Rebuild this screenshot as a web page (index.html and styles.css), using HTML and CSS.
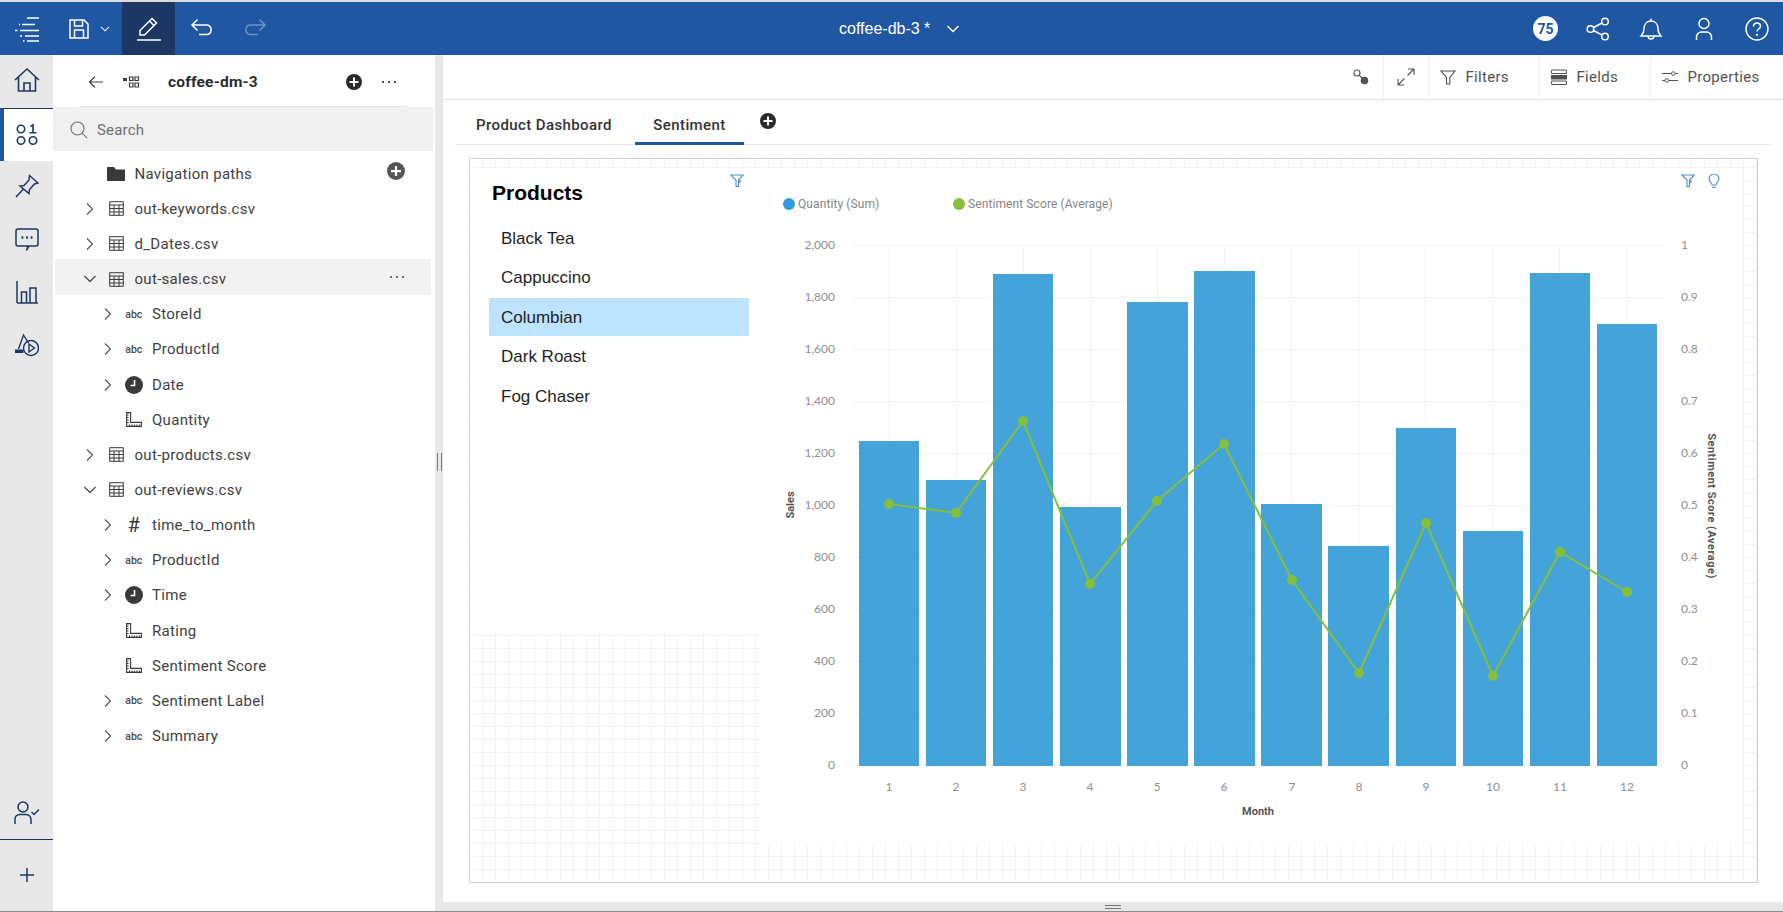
FILE: index.html
```html
<!DOCTYPE html>
<html lang="en">
<head>
<meta charset="utf-8">
<title>coffee-db-3</title>
<link rel="stylesheet" href="styles.css">
</head>
<body>
<svg class="sprite" xmlns="http://www.w3.org/2000/svg">
  <symbol id="i-menu" viewBox="0 0 26 26"><path d="M13 2h12M8 8.500h13M6 14.500h19M11 20h14M13 25h12" fill="none" stroke="currentColor" stroke-width="1.700"/><path d="M5 8.500h1M1 14.500h2.500M6 20h2M9 25h1.500" fill="none" stroke="currentColor" stroke-width="1.700"/></symbol>
  <symbol id="i-save" viewBox="0 0 24 24"><path d="M3 3h14l4 4v14H3zM7.500 3v6h8V3M7.500 21v-8h9v8" fill="none" stroke="currentColor" stroke-width="1.500"/></symbol>
  <symbol id="i-down" viewBox="0 0 16 16"><path d="M2.500 5 8 10.500 13.500 5" fill="none" stroke="currentColor" stroke-width="1.400"/></symbol>
  <symbol id="i-right" viewBox="0 0 16 16"><path d="M5 2.500 10.500 8 5 13.500" fill="none" stroke="currentColor" stroke-width="1.100"/></symbol>
  <symbol id="i-pencil" viewBox="0 0 26 26"><path d="M4 19v-4.500L16 2.500 20.500 7 8.500 19zM13.500 5l4.500 4.500" fill="none" stroke="currentColor" stroke-width="1.500"/><path d="M1 24h24" stroke="currentColor" stroke-width="1.500"/></symbol>
  <symbol id="i-undo" viewBox="0 0 24 24"><path d="M2 8h15a4.800 4.800 0 0 1 0 9.500H9M7.500 2.500 2 8l5.500 5.500" fill="none" stroke="currentColor" stroke-width="1.500"/></symbol>
  <symbol id="i-redo" viewBox="0 0 24 24"><path d="M22 8H7a4.800 4.800 0 0 0 0 9.500h8M16.500 2.500 22 8l-5.500 5.500" fill="none" stroke="currentColor" stroke-width="1.500"/></symbol>
  <symbol id="i-share" viewBox="0 0 24 24"><g fill="none" stroke="currentColor" stroke-width="1.500"><circle cx="4.500" cy="12" r="3.300"/><circle cx="19" cy="4.500" r="3.300"/><circle cx="19" cy="19.500" r="3.300"/><path d="M7.500 10.500 16 6M7.500 13.500 16 18"/></g></symbol>
  <symbol id="i-bell" viewBox="0 0 24 24"><path d="M2 19c2-2 3-3 3-7 0-5 3-8 7-8s7 3 7 8c0 4 1 5 3 7zM12 4V1.500M9 19a3 3 0 0 0 6 0" fill="none" stroke="currentColor" stroke-width="1.400"/></symbol>
  <symbol id="i-user" viewBox="0 0 24 24"><circle cx="12" cy="6.500" r="5" fill="none" stroke="currentColor" stroke-width="1.500"/><path d="M4.500 23v-3a5 5 0 0 1 5-5h5a5 5 0 0 1 5 5v3" fill="none" stroke="currentColor" stroke-width="1.500"/></symbol>
  <symbol id="i-help" viewBox="0 0 24 24"><circle cx="12" cy="12" r="11" fill="none" stroke="currentColor" stroke-width="1.400"/><path d="M8.500 9.500C8.500 7 10 6 12 6s3.500 1.300 3.500 3.300c0 2.700-3.500 2.700-3.500 5.200" fill="none" stroke="currentColor" stroke-width="1.500"/><circle cx="12" cy="17.800" r="1.100" fill="currentColor"/></symbol>
  <symbol id="i-home" viewBox="0 0 26 26"><path d="M1 13 13 2l12 11M4.500 10v14h17V10M10 24v-8h6v8" fill="none" stroke="currentColor" stroke-width="1.600"/></symbol>
  <symbol id="i-data" viewBox="0 0 24 24"><g fill="none" stroke="currentColor" stroke-width="1.600"><circle cx="6" cy="6" r="3.700"/><circle cx="6" cy="17.500" r="3.700"/><circle cx="18" cy="17.500" r="3.700"/><path d="M15.500 3.500 18 2v7.500M14.500 9.800h7"/></g></symbol>
  <symbol id="i-pin" viewBox="0 0 24 24"><path d="M14.500 1.500 23 9l-3.500 1-5 5.500-.5 4L5 12l4-.5 5-5.500zM1 23l7-7.500" fill="none" stroke="currentColor" stroke-width="1.500"/></symbol>
  <symbol id="i-comment" viewBox="0 0 24 24"><path d="M3 2h18a2 2 0 0 1 2 2v13a2 2 0 0 1-2 2h-7l-2.500 4.500L13 19H3a2 2 0 0 1-2-2V4a2 2 0 0 1 2-2z" fill="none" stroke="currentColor" stroke-width="1.500"/><path d="M6.500 10.500h1.800M11.100 10.500h1.800M15.700 10.500h1.800" stroke="currentColor" stroke-width="2.400"/></symbol>
  <symbol id="i-chart" viewBox="0 0 24 24"><path d="M2 1v22M2 23h21M6.500 23v-11h5v11M15 23V8h6v15" fill="none" stroke="currentColor" stroke-width="1.500"/></symbol>
  <symbol id="i-shapes" viewBox="0 0 24 24"><g fill="none" stroke="currentColor" stroke-width="1.400"><path d="M3.500 16 8.500 2l5 8"/><circle cx="16" cy="15" r="7.500"/><path d="m14 11 5.500 4-5.500 4z"/></g><path d="M0 16.500h8.500V20H0z" fill="currentColor"/></symbol>
  <symbol id="i-usercheck" viewBox="0 0 26 24"><circle cx="9" cy="6" r="5" fill="none" stroke="currentColor" stroke-width="1.500"/><path d="M1 23v-5a4.500 4.500 0 0 1 4.500-4.500h6A5 5 0 0 1 17 18.500V23M17.500 11l2.500 2.500 5-5" fill="none" stroke="currentColor" stroke-width="1.500"/></symbol>
  <symbol id="i-plus" viewBox="0 0 16 16"><path d="M8 1v14M1 8h14" stroke="currentColor" stroke-width="1.500"/></symbol>
  <symbol id="i-back" viewBox="0 0 16 16"><path d="M15 8H1.500M7 2.500 1.500 8 7 13.500" fill="none" stroke="currentColor" stroke-width="1.100"/></symbol>
  <symbol id="i-model" viewBox="0 0 17 12"><path d="M0 2h4v3H0z" fill="currentColor"/><path d="M6.500 1h3.500v3.500H6.500zM12 1h3.500v3.500H12zM6.500 7H10v4H6.500zM12 7h3.500v4H12z" fill="none" stroke="currentColor" stroke-width="1.200"/></symbol>
  <symbol id="i-addc" viewBox="0 0 16 16"><circle cx="8" cy="8" r="8" fill="currentColor"/><path d="M8 3.500v9M3.500 8h9" stroke="#fff" stroke-width="2"/></symbol>
  <symbol id="i-dots" viewBox="0 0 16 4"><circle cx="2" cy="2" r="1.100" fill="currentColor"/><circle cx="8" cy="2" r="1.100" fill="currentColor"/><circle cx="14" cy="2" r="1.100" fill="currentColor"/></symbol>
  <symbol id="i-search" viewBox="0 0 18 18"><circle cx="7.500" cy="7.500" r="6.500" fill="none" stroke="currentColor" stroke-width="1.100"/><path d="m12.200 12.200 5 5" stroke="currentColor" stroke-width="1.100"/></symbol>
  <symbol id="i-folder" viewBox="0 0 18 14"><path d="M0 0h7l2 2.500h9V14H0z" fill="currentColor"/></symbol>
  <symbol id="i-table" viewBox="0 0 15 15"><path d="M.700.700h13.600v13.600H.700zM.700 4h13.600M.700 7.500h13.600M.700 11h13.600M5 4v10.300M10 4v10.300" fill="none" stroke="currentColor" stroke-width="1"/></symbol>
  <symbol id="i-clock" viewBox="0 0 18 18"><circle cx="9" cy="9" r="9" fill="currentColor"/><path d="M9.500 4v5.500H5.500" fill="none" stroke="#fff" stroke-width="1.600"/></symbol>
  <symbol id="i-ruler" viewBox="0 0 16 15"><path d="M.600.600h4v9.800h10.800v4H.600zM.600 3h2M.600 5.500h2M.600 8h2M.600 10.500h2M3.500 14.400v-2M6 14.400v-2M8.500 14.400v-2M11 14.400v-2M13.500 14.400v-2" fill="none" stroke="currentColor" stroke-width="1.100"/></symbol>
  <symbol id="i-key" viewBox="0 0 16 16"><circle cx="4" cy="4" r="3" fill="none" stroke="currentColor" stroke-width="1.100"/><path d="m6 6 4 4" stroke="currentColor" stroke-width="1.100"/><circle cx="11.500" cy="11.500" r="3.800" fill="currentColor"/></symbol>
  <symbol id="i-expand" viewBox="0 0 18 18"><path d="M10.500 7.500 17 1M11 1h6v6M7.500 10.500 1 17M1 11v6h6" fill="none" stroke="currentColor" stroke-width="1.100"/></symbol>
  <symbol id="i-filter" viewBox="0 0 16 16"><path d="M1 2h14L9.800 8.500V15H6.500V8.500z" fill="none" stroke="currentColor" stroke-width="1.100"/></symbol>
  <symbol id="i-fields" viewBox="0 0 16 16"><path d="M.600 1h14.800v3.500H.600zM.600 12h14.800v3.500H.600z" fill="none" stroke="currentColor" stroke-width="1"/><path d="M0 6h16v4.500H0z" fill="currentColor"/></symbol>
  <symbol id="i-props" viewBox="0 0 16 16"><g fill="none" stroke="currentColor" stroke-width="1"><path d="M0 4.500h9.500M13 4.500h3M0 11.500h3M6.500 11.500H16"/><circle cx="11.300" cy="4.500" r="1.800"/><circle cx="4.700" cy="11.500" r="1.800"/></g></symbol>
  <symbol id="i-wfilter" viewBox="0 0 14 14"><path d="M.700 1h12.600L8.500 6v6.500H6V6z" fill="none" stroke="currentColor" stroke-width="1.100"/><circle cx="9.500" cy="7.500" r="1.300" fill="currentColor"/></symbol>
  <symbol id="i-bulb" viewBox="0 0 12 15"><path d="M4 11C4 8.500 1 7.500 1 5a5 5 0 0 1 10 0c0 2.500-3 3.500-3 6zM4 13.200h4" fill="none" stroke="currentColor" stroke-width="1.100"/></symbol>
</svg>

<div class="app">
  <header class="topbar">
    <div class="topbar-left">
      <button class="tb-btn"><svg class="ic-26"><use href="#i-menu"/></svg></button>
      <button class="tb-btn save"><svg class="ic-24"><use href="#i-save"/></svg><svg class="ic-12 caret"><use href="#i-down"/></svg></button>
      <button class="tb-btn active"><svg class="ic-26"><use href="#i-pencil"/></svg></button>
      <button class="tb-btn"><svg class="ic-24"><use href="#i-undo"/></svg></button>
      <button class="tb-btn faded"><svg class="ic-24"><use href="#i-redo"/></svg></button>
    </div>
    <div class="doc-title"><span>coffee-db-3 *</span><svg class="ic-16"><use href="#i-down"/></svg></div>
    <div class="topbar-right">
      <span class="badge">75</span>
      <button class="tb-btn"><svg class="ic-24"><use href="#i-share"/></svg></button>
      <button class="tb-btn"><svg class="ic-24"><use href="#i-bell"/></svg></button>
      <button class="tb-btn"><svg class="ic-24"><use href="#i-user"/></svg></button>
      <button class="tb-btn"><svg class="ic-24"><use href="#i-help"/></svg></button>
    </div>
  </header>

  <div class="workspace">
    <nav class="rail">
      <a class="rail-item up"><svg class="ic-26"><use href="#i-home"/></svg></a>
      <a class="rail-item current"><svg class="ic-24"><use href="#i-data"/></svg></a>
      <a class="rail-item up"><svg class="ic-24"><use href="#i-pin"/></svg></a>
      <a class="rail-item up"><svg class="ic-24"><use href="#i-comment"/></svg></a>
      <a class="rail-item up"><svg class="ic-24"><use href="#i-chart"/></svg></a>
      <a class="rail-item up"><svg class="ic-24"><use href="#i-shapes"/></svg></a>
      <a class="rail-item rail-user"><svg class="ic-26"><use href="#i-usercheck"/></svg></a>
      <a class="rail-item rail-add"><svg class="ic-16"><use href="#i-plus"/></svg></a>
    </nav>

    <aside class="panel">
      <div class="panel-head">
        <svg class="ic-16"><use href="#i-back"/></svg>
        <svg class="ic-model"><use href="#i-model"/></svg>
        <strong class="panel-title">coffee-dm-3</strong>
        <svg class="ic-16 head-add"><use href="#i-addc"/></svg>
        <svg class="ic-dots"><use href="#i-dots"/></svg>
      </div>
      <div class="search"><svg class="ic-18"><use href="#i-search"/></svg><span>Search</span></div>
      <ul class="tree">
        <li class="row l1"><span class="chev"></span><span class="ico"><svg class="ic-folder"><use href="#i-folder"/></svg></span><span>Navigation paths</span><svg class="act ic-18 muted"><use href="#i-addc"/></svg></li>
        <li class="row l1"><svg class="chev"><use href="#i-right"/></svg><span class="ico"><svg class="ic-15"><use href="#i-table"/></svg></span><span>out-keywords.csv</span></li>
        <li class="row l1"><svg class="chev"><use href="#i-right"/></svg><span class="ico"><svg class="ic-15"><use href="#i-table"/></svg></span><span>d_Dates.csv</span></li>
        <li class="row l1 hover"><svg class="chev"><use href="#i-down"/></svg><span class="ico"><svg class="ic-15"><use href="#i-table"/></svg></span><span>out-sales.csv</span><svg class="act ic-dots"><use href="#i-dots"/></svg></li>
        <li class="row l2"><svg class="chev"><use href="#i-right"/></svg><span class="ico abc">abc</span><span>StoreId</span></li>
        <li class="row l2"><svg class="chev"><use href="#i-right"/></svg><span class="ico abc">abc</span><span>ProductId</span></li>
        <li class="row l2"><svg class="chev"><use href="#i-right"/></svg><span class="ico"><svg class="ic-18"><use href="#i-clock"/></svg></span><span>Date</span></li>
        <li class="row l2"><span class="chev"></span><span class="ico"><svg class="ic-ruler"><use href="#i-ruler"/></svg></span><span>Quantity</span></li>
        <li class="row l1"><svg class="chev"><use href="#i-right"/></svg><span class="ico"><svg class="ic-15"><use href="#i-table"/></svg></span><span>out-products.csv</span></li>
        <li class="row l1"><svg class="chev"><use href="#i-down"/></svg><span class="ico"><svg class="ic-15"><use href="#i-table"/></svg></span><span>out-reviews.csv</span></li>
        <li class="row l2"><svg class="chev"><use href="#i-right"/></svg><span class="ico hash">#</span><span>time_to_month</span></li>
        <li class="row l2"><svg class="chev"><use href="#i-right"/></svg><span class="ico abc">abc</span><span>ProductId</span></li>
        <li class="row l2"><svg class="chev"><use href="#i-right"/></svg><span class="ico"><svg class="ic-18"><use href="#i-clock"/></svg></span><span>Time</span></li>
        <li class="row l2"><span class="chev"></span><span class="ico"><svg class="ic-ruler"><use href="#i-ruler"/></svg></span><span>Rating</span></li>
        <li class="row l2"><span class="chev"></span><span class="ico"><svg class="ic-ruler"><use href="#i-ruler"/></svg></span><span>Sentiment Score</span></li>
        <li class="row l2"><svg class="chev"><use href="#i-right"/></svg><span class="ico abc">abc</span><span>Sentiment Label</span></li>
        <li class="row l2"><svg class="chev"><use href="#i-right"/></svg><span class="ico abc">abc</span><span>Summary</span></li>
      </ul>
    </aside>

    <div class="splitter"><span class="grip"></span></div>

    <main class="main">
      <div class="toolbar">
        <div class="tool plain"><svg class="ic-16"><use href="#i-key"/></svg></div>
        <div class="tool expand"><svg class="ic-18"><use href="#i-expand"/></svg></div>
        <div class="tool labelled"><svg class="ic-16"><use href="#i-filter"/></svg><span>Filters</span></div>
        <div class="tool labelled"><svg class="ic-16"><use href="#i-fields"/></svg><span>Fields</span></div>
        <div class="tool labelled last"><svg class="ic-16"><use href="#i-props"/></svg><span>Properties</span></div>
      </div>
      <div class="tabs">
        <div class="tab first">Product Dashboard</div>
        <div class="tab selected">Sentiment</div>
        <svg class="ic-16 tab-add"><use href="#i-addc"/></svg>
      </div>
      <div class="canvas-wrap">
        <div class="canvas">
          <section class="widget products">
            <h2 class="products-title">Products</h2>
            <svg class="ic-14 widget-filter"><use href="#i-wfilter"/></svg>
            <ul class="product-list">
              <li>Black Tea</li>
              <li>Cappuccino</li>
              <li class="on">Columbian</li>
              <li>Dark Roast</li>
              <li>Fog Chaser</li>
            </ul>
          </section>
          <section class="widget chart">
            <svg class="chart-svg" viewBox="759 168 984 676" xmlns="http://www.w3.org/2000/svg">
              <g class="grid">
                <path d="M853 245.500H1663M853 297.500H1663M853 349.500H1663M853 401.500H1663M853 453.500H1663M853 505.500H1663M853 557.500H1663M853 609.500H1663M853 661.500H1663M853 713.500H1663M853 765.500H1663"/>
                <path d="M889.500 245V765M956.500 245V765M1023.500 245V765M1090.500 245V765M1157.500 245V765M1224.500 245V765M1291.500 245V765M1358.500 245V765M1425.500 245V765M1492.500 245V765M1559.500 245V765M1626.500 245V765"/>
              </g>
              <g class="bars">
                <rect x="859" y="441" width="60" height="325"/>
                <rect x="926" y="480" width="60" height="286"/>
                <rect x="993" y="274" width="60" height="492"/>
                <rect x="1060" y="507" width="61" height="259"/>
                <rect x="1127" y="302" width="61" height="464"/>
                <rect x="1194" y="271" width="61" height="495"/>
                <rect x="1261" y="504" width="61" height="262"/>
                <rect x="1328" y="546" width="61" height="220"/>
                <rect x="1396" y="428" width="60" height="338"/>
                <rect x="1463" y="531" width="60" height="235"/>
                <rect x="1530" y="273" width="60" height="493"/>
                <rect x="1597" y="324" width="60" height="442"/>
              </g>
              <polyline class="trend" points="889,504 956,513 1023,421 1090,584 1157,501 1224,444 1292,580 1359,673 1426,523 1493,676 1560,552 1627,592"/>
              <g class="dots">
                <circle cx="889" cy="504" r="5"/><circle cx="956" cy="513" r="5"/><circle cx="1023" cy="421" r="5"/><circle cx="1090" cy="584" r="5"/><circle cx="1157" cy="501" r="5"/><circle cx="1224" cy="444" r="5"/><circle cx="1292" cy="580" r="5"/><circle cx="1359" cy="673" r="5"/><circle cx="1426" cy="523" r="5"/><circle cx="1493" cy="676" r="5"/><circle cx="1560" cy="552" r="5"/><circle cx="1627" cy="592" r="5"/>
              </g>
              <circle class="lg-blue" cx="789" cy="204" r="6"/>
              <text class="legend" x="798" y="208">Quantity (Sum)</text>
              <circle class="lg-green" cx="959" cy="204" r="6"/>
              <text class="legend" x="968" y="208">Sentiment Score (Average)</text>
              <use href="#i-wfilter" class="wicon" x="1681" y="174" width="14" height="14"/>
              <use href="#i-bulb" class="wicon" x="1708" y="174" width="12" height="15"/>
              <g class="tick end">
                <text x="835" y="249">2,000</text><text x="835" y="301">1,800</text><text x="835" y="353">1,600</text><text x="835" y="405">1,400</text><text x="835" y="457">1,200</text><text x="835" y="509">1,000</text><text x="835" y="561">800</text><text x="835" y="613">600</text><text x="835" y="665">400</text><text x="835" y="717">200</text><text x="835" y="769">0</text>
              </g>
              <g class="tick">
                <text x="1681" y="249">1</text><text x="1681" y="301">0.9</text><text x="1681" y="353">0.8</text><text x="1681" y="405">0.7</text><text x="1681" y="457">0.6</text><text x="1681" y="509">0.5</text><text x="1681" y="561">0.4</text><text x="1681" y="613">0.3</text><text x="1681" y="665">0.2</text><text x="1681" y="717">0.1</text><text x="1681" y="769">0</text>
              </g>
              <g class="tick mid">
                <text x="889" y="791">1</text><text x="956" y="791">2</text><text x="1023" y="791">3</text><text x="1090" y="791">4</text><text x="1157" y="791">5</text><text x="1224" y="791">6</text><text x="1292" y="791">7</text><text x="1359" y="791">8</text><text x="1426" y="791">9</text><text x="1493" y="791">10</text><text x="1560" y="791">11</text><text x="1627" y="791">12</text>
              </g>
              <text class="axis" x="1258" y="815">Month</text>
              <text class="axis" transform="translate(794 505) rotate(-90)">Sales</text>
              <text class="axis spaced" transform="translate(1708 506) rotate(90)">Sentiment Score (Average)</text>
            </svg>
          </section>
        </div>
      </div>
      <div class="bottom-bar"><span class="h-grip"></span></div>
    </main>
  </div>
</div>
</body>
</html>
```

FILE: styles.css
```css
* { box-sizing: border-box; }
html, body { margin: 0; height: 100%; overflow: hidden; background: #e8e8e8; }
body { font-family: Roboto, "Noto Sans", sans-serif; color: #393939; }
ul { list-style: none; margin: 0; padding: 0; }
button { border: 0; background: none; color: inherit; padding: 0; font: inherit; }
svg { display: block; flex: none; }
.sprite { position: absolute; width: 0; height: 0; overflow: hidden; }

.ic-12 { width: 12px; height: 12px; }
.ic-14 { width: 14px; height: 14px; }
.ic-15 { width: 15px; height: 15px; }
.ic-16 { width: 16px; height: 16px; }
.ic-18 { width: 18px; height: 18px; }
.ic-24 { width: 24px; height: 24px; }
.ic-26 { width: 26px; height: 26px; }
.ic-dots { width: 16px; height: 4px; }
.ic-model { width: 17px; height: 12px; }
.ic-folder { width: 18px; height: 14px; }
.ic-ruler { width: 16px; height: 15px; }

.app { height: 912px; display: flex; flex-direction: column; padding-top: 2px; background: #dcdcdc; border-bottom: 1px solid #8c8c8c; }

/* top bar */
.topbar { height: 53px; flex: none; background: #1f57a3; color: #fff; display: flex; align-items: center; justify-content: space-between; position: relative; }
.topbar-left, .topbar-right { display: flex; align-items: center; height: 100%; }
.tb-btn { width: 53px; height: 53px; display: flex; align-items: center; justify-content: center; }
.tb-btn.save { width: 69px; gap: 8px; justify-content: flex-start; padding-left: 14px; }
.tb-btn.active { background: #1c3764; }
.tb-btn.faded { opacity: .35; }
.doc-title { position: absolute; left: 839px; top: 0; height: 53px; display: flex; align-items: center; gap: 15px; font-family: "Liberation Sans", sans-serif; font-size: 16px; }
.badge { width: 25px; height: 25px; border-radius: 50%; background: #fff; color: #1f57a3; font-size: 14px; font-weight: 700; display: flex; align-items: center; justify-content: center; margin-right: 13px; }

/* layout */
.workspace { flex: 1; display: flex; min-height: 0; }
.rail { width: 53px; flex: none; background: #e8e8e8; color: #1c3764; display: flex; flex-direction: column; }
.rail-item { height: 53px; flex: none; display: flex; align-items: center; justify-content: center; }
.rail-item.up { padding-bottom: 4px; }
.rail-item.current { background: #fff; border-top: 1px solid #1c3764; border-left: 4px solid #1f57a3; padding-right: 4px; }
.rail-user { margin-top: auto; height: 53px; border-bottom: 1px solid #1c3764; }
.rail-add { height: 71px; padding-bottom: 2px; }

/* side panel */
.panel { width: 382px; flex: none; background: #fff; display: flex; flex-direction: column; color: #393939; }
.panel-head { height: 52px; margin: 0 28px 0 26px; padding: 2px 10px 0 9px; display: flex; align-items: center; border-bottom: 1px solid #e4e4e4; flex: none; }
.ic-model { margin-left: 19px; }
.panel-title { margin-left: 28px; font-size: 15.500px; font-weight: 700; color: #2b2b2b; letter-spacing: .2px; }
.head-add { margin-left: auto; color: #2b2b2b; }
.panel-head .ic-dots { margin-left: 19px; color: #333; }
.search { height: 44px; width: 380px; flex: none; background: #f0f0f0; display: flex; align-items: center; padding: 2px 0 0 17px; gap: 9px; font-size: 15px; color: #6f6f6f; letter-spacing: .2px; }
.tree { padding-top: 3px; }
.row { height: 35.160px; padding: 4px 26px 0 0; margin: 0 4px 0 2px; display: flex; align-items: center; font-size: 15px; letter-spacing: .3px; color: #3f3f3f; }
.row.hover { background: #f2f2f2; }
.row.l1 { padding-left: 27px; }
.row.l2 { padding-left: 44.500px; }
.chev { width: 16px; height: 16px; flex: none; color: #525252; }
.ico { width: 36.500px; flex: none; display: flex; align-items: center; justify-content: center; color: #393939; }
.abc { font-size: 10.500px; font-weight: 500; letter-spacing: 0; color: #4a4a4a; }
.hash { font-size: 20px; line-height: 20px; letter-spacing: 0; }
.act { margin-left: auto; margin-bottom: 5px; }
.ic-dots.act { color: #555; }
.muted { color: #555; }

.splitter { width: 8px; flex: none; background: #e8e8e8; display: flex; align-items: center; justify-content: center; }
.grip { width: 5px; height: 18px; border-left: 1px solid #777; border-right: 1px solid #777; margin-top: -42px; }

/* main */
.main { flex: 1; min-width: 0; background: #fff; display: flex; flex-direction: column; }
.toolbar { height: 45px; flex: none; display: flex; justify-content: flex-end; border-bottom: 1px solid #e4e4e4; font-size: 15px; letter-spacing: .3px; color: #525252; }
.tool { height: 100%; display: flex; align-items: center; border-right: 1px solid #eeeeee; }
.tool.plain { width: 40px; justify-content: center; padding-right: 6px; }
.tool.expand { width: 45px; justify-content: center; }
.tool.labelled { width: 111px; padding-left: 11px; gap: 9.500px; }
.tool.last { width: 132px; border-right: 0; }
.tabs { height: 45px; flex: none; margin: 0 12px; display: flex; align-items: stretch; border-bottom: 1px solid #e4e4e4; }
.tab { display: flex; align-items: center; justify-content: center; font-size: 15px; font-weight: 500; color: #333; letter-spacing: .4px; padding-top: 8px; border-bottom: 3px solid transparent; margin-bottom: -1px; }
.tab.first { width: 180px; padding-left: 21px; justify-content: flex-start; }
.tab.selected { width: 109px; border-bottom-color: #1f57a4; }
.tab-add { margin: 13px 0 0 16px; color: #2b2b2b; }

.canvas-wrap { flex: 1; min-height: 0; padding: 13px 25px 19px 26px; }
.canvas { position: relative; height: 100%; border: 1px solid #d0d0d0;
  background-color: #fff;
  background-image: linear-gradient(#f3f3f3 1px, transparent 1px), linear-gradient(90deg, #f3f3f3 1px, transparent 1px);
  background-size: 13px 13px;
  background-position: 12px 8px; }
.widget { position: absolute; background: #fff; }
.products { left: 3px; top: 9px; width: 286px; height: 465px; }
.chart { left: 289px; top: 9px; width: 984px; height: 676px; }
.chart-svg { width: 984px; height: 676px; }

.products-title { margin: 0; padding: 13px 0 0 19px; font: 700 21px/24px "Liberation Sans", Arial, sans-serif; color: #000; }
.widget-filter { position: absolute; left: 257px; top: 6px; color: #4f87d2; }
.product-list { margin: 14px 0 0 16px; width: 260px; display: flex; flex-direction: column; gap: 1.400px; font: 400 17px/38px "Liberation Sans", Arial, sans-serif; color: #1f1f1f; }
.product-list li { height: 38px; padding: 1px 0 0 12px; }
.product-list li.on { background: #bde3fe; }

.grid path { stroke: #f2f2f2; stroke-width: 1; fill: none; }
.bars rect { fill: #44a3d9; }
.trend { fill: none; stroke: #84c03c; stroke-width: 2; }
.dots circle, .lg-green { fill: #84c03c; }
.lg-blue { fill: #2f9bd9; }
.legend { font: 400 12px Roboto, sans-serif; fill: #858585; letter-spacing: .1px; }
.wicon { color: #4f87d2; }
.tick text { font: 400 12px Lato, sans-serif; fill: #8f8f8f; }
.tick.end text { text-anchor: end; }
.tick.mid text { text-anchor: middle; }
.axis { font: 700 11px Roboto, sans-serif; fill: #555; text-anchor: middle; }
.axis.spaced { letter-spacing: .5px; }

.bottom-bar { height: 9px; flex: none; background: #e8e8e8; display: flex; align-items: center; justify-content: center; }
.h-grip { width: 16px; height: 4px; border-top: 1px solid #777; border-bottom: 1px solid #777; }
```
